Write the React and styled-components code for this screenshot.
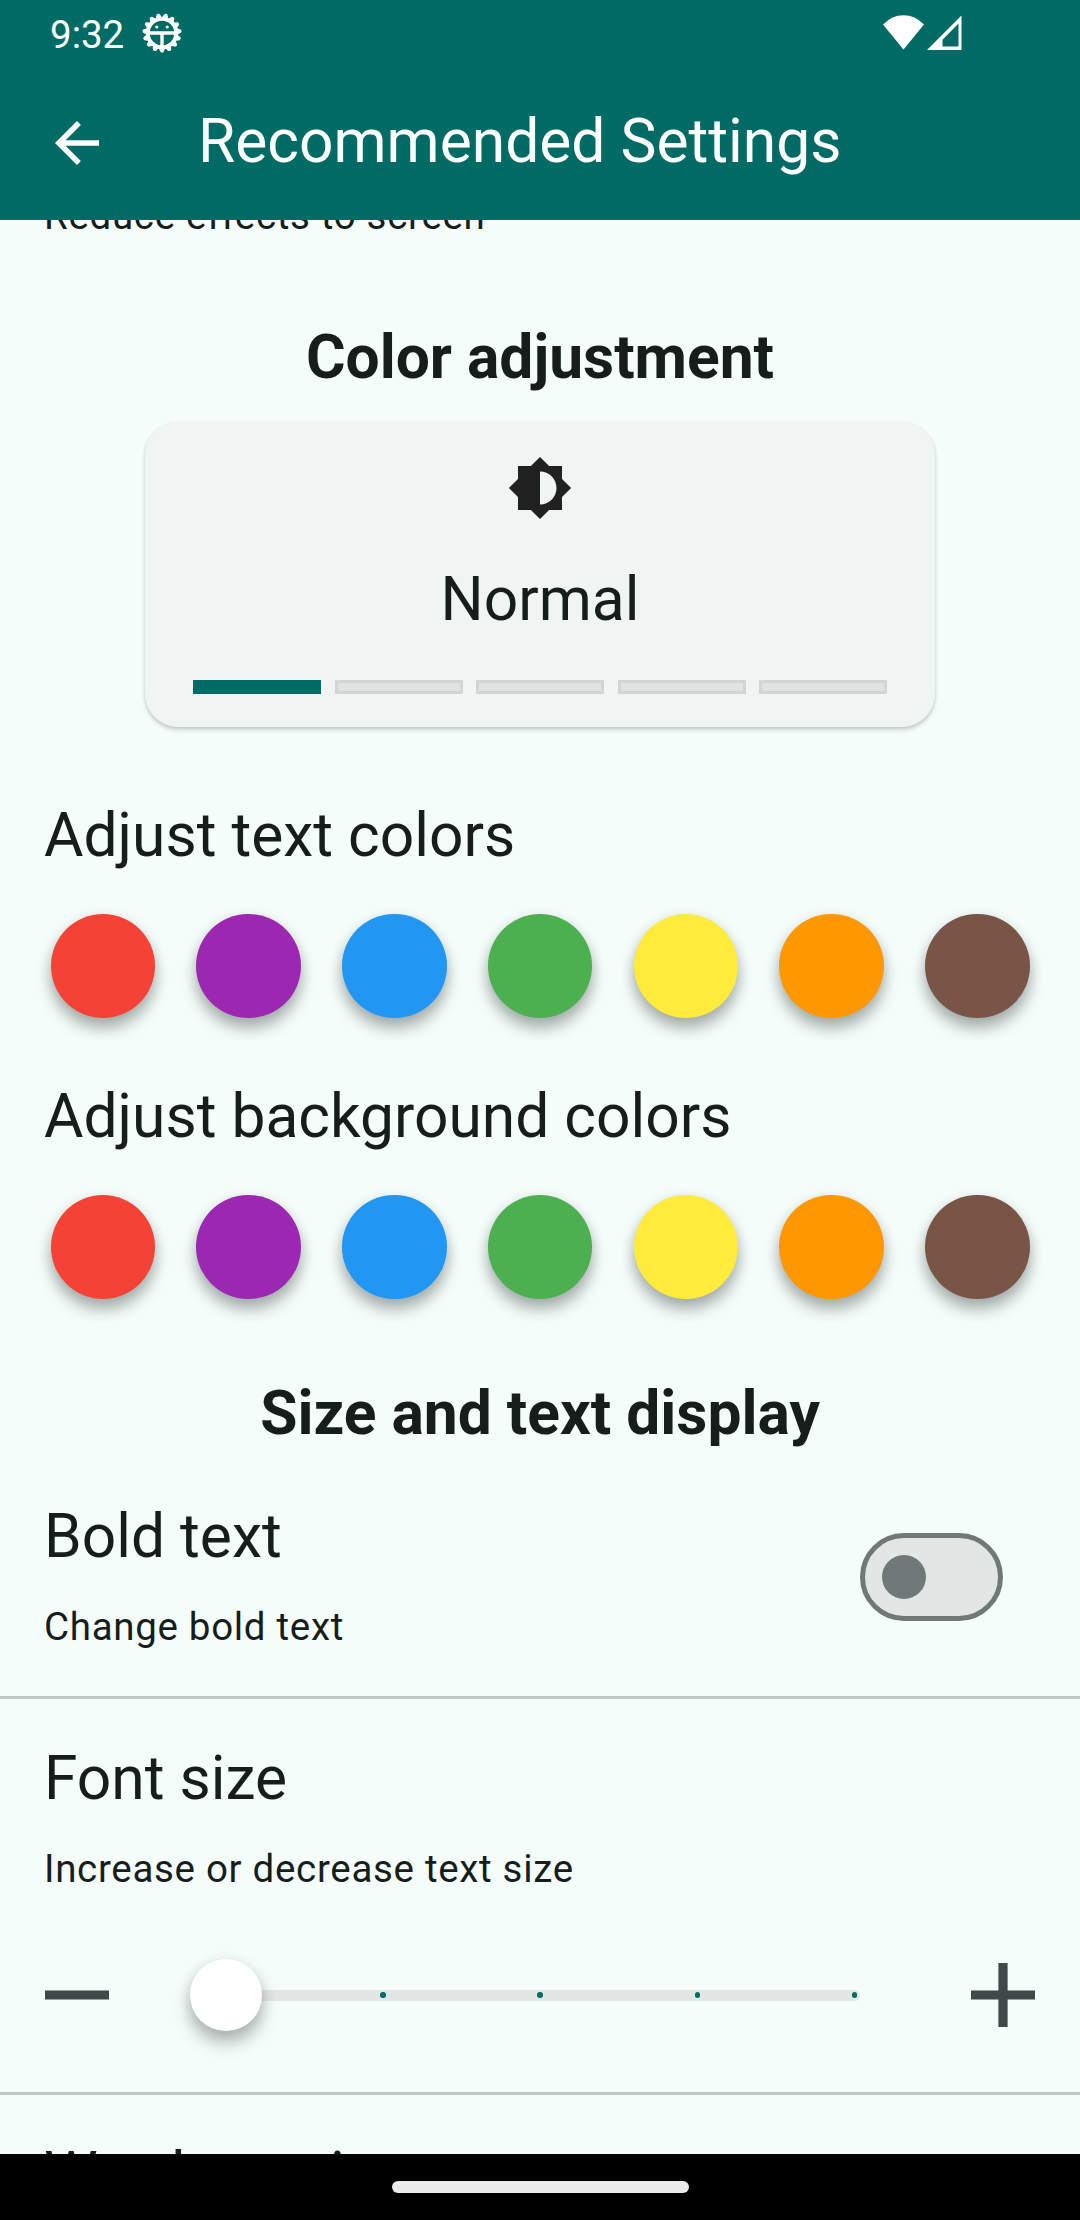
import React from "react";
import styled, { createGlobalStyle } from "styled-components";

const teal = "#006a64";
const surface = "#f4fdfa";
const ink = "#171d1b";

const GlobalStyle = createGlobalStyle`
  * { box-sizing: border-box; }
  body { margin: 0; background: ${surface}; }
`;

const Screen = styled.div`
  display: flex;
  flex-direction: column;
  width: 1080px;
  height: 2220px;
  overflow: hidden;
  background: ${surface};
  color: ${ink};
  font-family: Roboto, "Noto Sans", sans-serif;
`;

const Header = styled.header`
  flex: none;
  height: 220px;
  background: ${teal};
  color: #fff;
`;

const StatusBar = styled.div`
  display: flex;
  align-items: center;
  height: 66px;
  padding: 0 118px 0 50px;
`;

const Clock = styled.span`
  width: 92px;
  padding-top: 3px;
  font-size: 38.5px;
  line-height: 68px;
`;

const StatusIcons = styled.div`
  display: flex;
  gap: 3px;
  margin-left: auto;
`;

const AppBar = styled.div`
  display: flex;
  align-items: center;
  height: 154px;
  padding-left: 44px;
`;

const BackIcon = styled.svg`
  width: 66px;
  height: 66px;
  margin: 0 88px 0 0;
`;

const AppTitle = styled.h1`
  margin: 0;
  padding-bottom: 3px;
  font-size: 60.5px;
  line-height: 77px;
  font-weight: 400;
  white-space: nowrap;
`;

const Content = styled.main`
  flex: 1;
  min-height: 0;
  overflow: hidden;
`;

const Title = styled.h3`
  margin: 0;
  font-size: 60.5px;
  line-height: 77px;
  font-weight: 400;
  white-space: nowrap;
`;

const Subtitle = styled.p`
  margin: 0;
  font-size: 38.5px;
  line-height: 55px;
  letter-spacing: 0.6875px;
  white-space: nowrap;
`;

const ClippedSetting = styled.div`
  margin-top: -32px;
  padding-left: 44px;
`;

const SectionHeading = styled.h2`
  margin: ${(p) => p.$top}px 0 0;
  font-size: 60.5px;
  line-height: 77px;
  font-weight: 700;
  text-align: center;
`;

const ModeCard = styled.section`
  display: flex;
  flex-direction: column;
  align-items: center;
  width: 790px;
  height: 305px;
  margin: 26px auto 0;
  padding: 33px 48px;
  border-radius: 33px;
  background: #f0f4f3;
  box-shadow: 0 3px 4px rgba(0, 20, 16, 0.16), 0 1px 3px rgba(0, 20, 16, 0.1);
`;

const ModeIcon = styled.svg`
  width: 66px;
  height: 66px;
  margin-bottom: 40px;
  fill: #212121;
`;

const Steps = styled.div`
  display: flex;
  justify-content: space-between;
  width: 100%;
  margin-top: 42px;
`;

const Step = styled.span`
  width: 128px;
  height: 14px;
  border: 3px solid ${(p) => (p.$active ? teal : "#d1d5d4")};
  background: ${(p) => (p.$active ? teal : "#dfe3e2")};
`;

const ColorGroup = styled.section`
  margin-top: ${(p) => p.$top}px;

  ${Title} {
    padding-left: 44px;
  }
`;

const SwatchRow = styled.div`
  display: flex;
  justify-content: space-between;
  height: 166px;
  padding: ${(p) => p.$top}px 50.5px 0 50.5px;
  overflow: hidden;
`;

const Swatch = styled.button`
  width: 104.5px;
  height: 104.5px;
  padding: 0;
  border: 0;
  border-radius: 50%;
  background: ${(p) => p.$color};
  box-shadow: 0 11px 15px rgba(0, 12, 10, 0.28), 0 3px 14px rgba(0, 12, 10, 0.11);
`;

const Setting = styled.section`
  padding: ${(p) => p.$top}px 0 ${(p) => p.$bottom}px 44px;
  border-bottom: 3px solid #bec9c6;
`;

const SettingHead = styled.div`
  display: flex;
  align-items: center;
  justify-content: space-between;
  height: 156px;
  padding-right: 77px;
`;

const Labels = styled.div`
  display: flex;
  flex-direction: column;
  gap: 24px;
`;

const Switch = styled.button`
  display: flex;
  align-items: center;
  width: 143px;
  height: 88px;
  margin-top: 2px;
  padding: 0 16.5px;
  border: 5.5px solid #6f7977;
  border-radius: 44px;
  background: #e2e7e5;
`;

const SwitchThumb = styled.span`
  width: 44px;
  height: 44px;
  border-radius: 50%;
  background: #6f7977;
`;

const SliderRow = styled.div`
  display: flex;
  align-items: center;
  justify-content: space-between;
  height: 72px;
  margin-top: 63px;
  padding: 0 45px 0 1px;
`;

const StepIcon = styled.svg`
  display: block;
  width: 64px;
  height: 64px;
  fill: #3f4947;
`;

const Track = styled.div`
  position: relative;
  display: flex;
  align-items: center;
  justify-content: space-between;
  width: 640px;
  height: 11px;
  padding: 0 2.75px;
  border-radius: 6px;
  background: #e2e7e5;
`;

const Tick = styled.span`
  width: 5.5px;
  height: 5.5px;
  border-radius: 50%;
  background: ${teal};
`;

const Thumb = styled.span`
  position: absolute;
  left: -30px;
  top: -30.25px;
  width: 71.5px;
  height: 71.5px;
  border-radius: 50%;
  background: #fff;
  box-shadow: 0 12px 17px rgba(0, 12, 10, 0.26), 0 3px 15px rgba(0, 12, 10, 0.11);
`;

const PeekSetting = styled.section`
  padding: 41px 0 0 44px;
`;

const NavBar = styled.footer`
  display: flex;
  flex: none;
  justify-content: center;
  height: 66px;
  padding-top: 27px;
  background: #000;
`;

const NavHandle = styled.span`
  width: 297px;
  height: 12px;
  border-radius: 6px;
  background: #ebebeb;
`;

const palette = ["#f44336", "#9c27b0", "#2196f3", "#4caf50", "#ffeb3b", "#ff9800", "#795548"];

const gearTeeth = Array.from({ length: 15 }, (_, i) => 180 + i * 24);

function DebugGear() {
  return (
    <svg width="40" height="40" viewBox="-20 -20 40 40">
      {gearTeeth.map((a) => (
        <path key={a} d="M-3.6 -14.5L-1.5 -19Q0 -20.2 1.5 -19L3.6 -14.5Z" fill="#fff" transform={`rotate(${a})`} />
      ))}
      <circle r="14.2" fill="none" stroke="#fff" strokeWidth="3.8" />
      <path d="M-13 0H13M0 0V14" stroke="#fff" strokeWidth="3.4" />
      <circle cx="-5.2" cy="-6" r="1.6" fill="#fff" />
      <circle cx="5.2" cy="-6" r="1.6" fill="#fff" />
    </svg>
  );
}

function ColorPicker({ label, top, rowTop }) {
  return (
    <ColorGroup $top={top}>
      <Title>{label}</Title>
      <SwatchRow $top={rowTop}>
        {palette.map((c) => (
          <Swatch key={c} $color={c} />
        ))}
      </SwatchRow>
    </ColorGroup>
  );
}

export default function App() {
  return (
    <Screen>
      <GlobalStyle />
      <Header>
        <StatusBar>
          <Clock>9:32</Clock>
          <DebugGear />
          <StatusIcons>
            <svg width="41" height="36" viewBox="0 0 41 36">
              <path d="M0 9.5Q9 .2 20.5 .2T41 9.5L20.5 34.5Z" fill="#fff" />
            </svg>
            <svg width="35" height="36" viewBox="0 0 35 36">
              <path d="M34.5 .5V35H0ZM31.5 8.5L15.5 24.8V31.5H31.5Z" fill="#fff" fillRule="evenodd" />
            </svg>
          </StatusIcons>
        </StatusBar>
        <AppBar>
          <BackIcon viewBox="0 0 24 24" fill="#fff">
            <path d="M20 11H7.83l5.59-5.59L12 4l-8 8 8 8 1.41-1.41L7.83 13H20v-2z" />
          </BackIcon>
          <AppTitle>Recommended Settings</AppTitle>
        </AppBar>
      </Header>
      <Content>
        <ClippedSetting>
          <Subtitle>Reduce effects to screen</Subtitle>
        </ClippedSetting>
        <SectionHeading $top={76}>Color adjustment</SectionHeading>
        <ModeCard>
          <ModeIcon viewBox="0 0 24 24">
            <path d="M20 15.31L23.31 12 20 8.69V4h-4.69L12 .69 8.69 4H4v4.69L.69 12 4 15.31V20h4.69L12 23.31 15.31 20H20v-4.69zM12 18V6c3.31 0 6 2.69 6 6s-2.69 6-6 6z" />
          </ModeIcon>
          <Title>Normal</Title>
          <Steps>
            {[0, 1, 2, 3, 4].map((i) => (
              <Step key={i} $active={i === 0} />
            ))}
          </Steps>
        </ModeCard>
        <ColorPicker label="Adjust text colors" top={70} rowTop={39.5} />
        <ColorPicker label="Adjust background colors" top={38} rowTop={39.5} />
        <SectionHeading $top={54}>Size and text display</SectionHeading>
        <Setting $top={46} $bottom={42}>
          <SettingHead>
            <Labels>
              <Title>Bold text</Title>
              <Subtitle>Change bold text</Subtitle>
            </Labels>
            <Switch>
              <SwitchThumb />
            </Switch>
          </SettingHead>
        </Setting>
        <Setting $top={41} $bottom={61}>
          <SettingHead>
            <Labels>
              <Title>Font size</Title>
              <Subtitle>Increase or decrease text size</Subtitle>
            </Labels>
          </SettingHead>
          <SliderRow>
            <StepIcon viewBox="0 0 64 64">
              <path d="M0 27.4H64V36.6H0Z" />
            </StepIcon>
            <Track>
              {[0, 1, 2, 3, 4].map((i) => (
                <Tick key={i} />
              ))}
              <Thumb />
            </Track>
            <StepIcon viewBox="0 0 64 64">
              <path d="M0 27.4H27.4V0H36.6V27.4H64V36.6H36.6V64H27.4V36.6H0Z" />
            </StepIcon>
          </SliderRow>
        </Setting>
        <PeekSetting>
          <Title>Word spacing</Title>
        </PeekSetting>
      </Content>
      <NavBar>
        <NavHandle />
      </NavBar>
    </Screen>
  );
}
